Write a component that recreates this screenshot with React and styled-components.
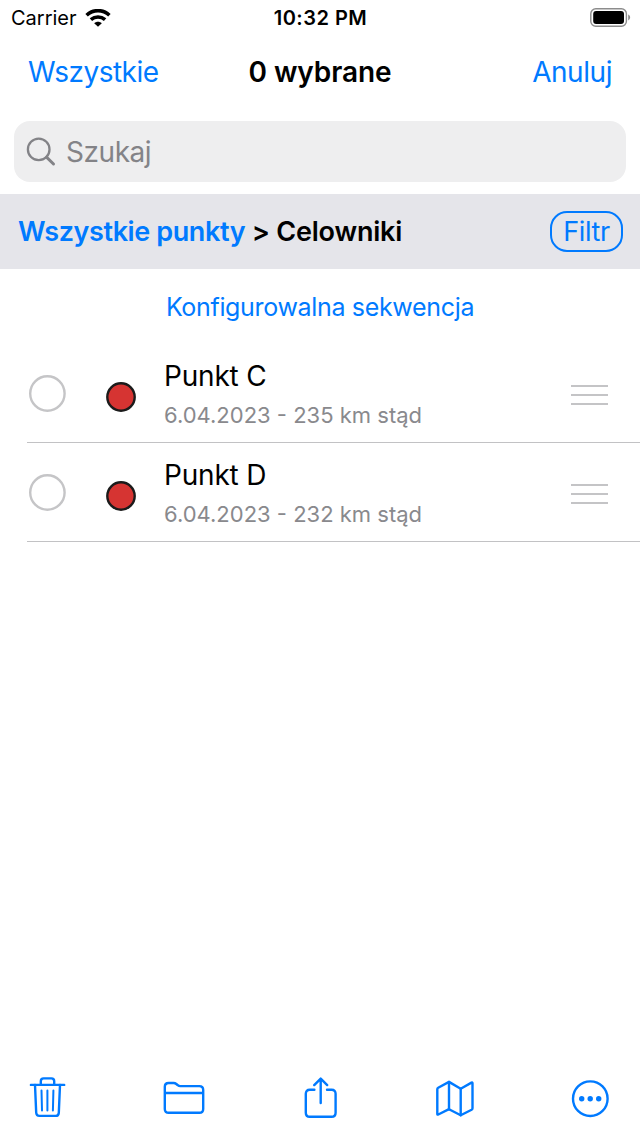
import React from "react";
import styled, { createGlobalStyle } from 'styled-components';

const GlobalStyle = createGlobalStyle`
    * {
        box-sizing: border-box;
    }
    body {
        margin: 0;
        background: #fff;
    }
`;

const Screen = styled.div`
    display: flex;
    flex-direction: column;
    width: 640px;
    height: 1136px;
    background: #fff;
    color: #000;
    font-family: Inter, "Liberation Sans", sans-serif;
    overflow: hidden;
`;

// size, weight and tracking differ for every label
const Text = styled.span`
    font-size: ${({ $size }) => $size}px;
    line-height: 36px;
    font-weight: ${({ $weight }) => $weight || 400};
    letter-spacing: ${({ $track }) => $track || 0}px;
    color: ${({ $color }) => $color || 'inherit'};
    white-space: pre;
`;

const StatusBar = styled.header`
    display: grid;
    grid-template-columns: 1fr auto 1fr;
    align-items: center;
    height: 35px;
    padding: 0 10px 0 11px;
`;

const Carrier = styled.div`
    display: flex;
    align-items: center;
    gap: 8px;
`;

const Battery = styled.svg`
    justify-self: end;
    margin-top: -2px;
    margin-right: -1px;
`;

const NavBar = styled.nav`
    display: grid;
    grid-template-columns: 1fr auto 1fr;
    align-items: center;
    height: 74px;
    padding: 0 28px;
`;

const NavButton = styled.button`
    justify-self: ${({ $end }) => ($end ? 'end' : 'start')};
    padding: 0;
    border: 0;
    background: none;
    color: #007aff;
    font-family: inherit;
`;

const SearchField = styled.div`
    display: flex;
    align-items: center;
    gap: 10px;
    height: 61px;
    margin: 12px 14px;
    padding-left: 12px;
    border-radius: 16px;
    background: #eeeeef;
    color: #838387;
`;

const PathBar = styled.div`
    display: flex;
    align-items: center;
    justify-content: space-between;
    height: 75px;
    padding: 0 17px 0 18px;
    background: #e5e5ea;
`;

const FilterButton = styled(NavButton)`
    width: 73px;
    height: 41px;
    border: 2px solid #007aff;
    border-radius: 17px;
`;

const Sequence = styled.div`
    display: flex;
    align-items: center;
    justify-content: center;
    height: 75px;
`;

const List = styled.ul`
    flex: 1;
    margin: 0;
    padding: 0 0 0 27px;
    list-style: none;
`;

const Row = styled.li`
    display: flex;
    align-items: center;
    height: 99px;
    padding-right: 32px;
    border-bottom: 1px solid #c2c2c4;
`;

const Check = styled.svg`
    width: 37px;
    height: 37px;
    margin-left: 2px;
    fill: none;
    stroke: #c5c5c7;
    stroke-width: 2.4;
`;

const Marker = styled.svg`
    width: 30px;
    height: 30px;
    margin: 7px 28px 0 40px;
    fill: #d63432;
    stroke: #1b1b1b;
    stroke-width: 2.4;
`;

const Details = styled.div`
    display: flex;
    flex: 1;
    flex-direction: column;
    gap: 3px;
    padding-top: 5px;
`;

const Handle = styled.span`
    width: 37px;
    height: 20px;
    margin-top: 3px;
    border: solid #c4c4c6;
    border-width: 2px 0;
    background: linear-gradient(#c4c4c6, #c4c4c6) 0 7px / 100% 2px no-repeat;
`;

const Toolbar = styled.footer`
    display: flex;
    justify-content: space-between;
    padding: 0 28px 16px 26px;
`;

const ToolIcon = styled.svg`
    width: 44px;
    height: 44px;
    fill: none;
    stroke: #007aff;
    stroke-width: 2.4;
    stroke-linecap: round;
    stroke-linejoin: round;
`;

const points = [
    { name: 'Punkt C', info: '6.04.2023 - 235 km stąd' },
    { name: 'Punkt D', info: '6.04.2023 - 232 km stąd' },
];

const WifiIcon = () => (
    <svg width="26" height="19" viewBox="0 0 26 19" fill="none" stroke="#000" strokeWidth="3.6">
        <path d="M1.6 6.2C8.2.1 17.8.1 24.4 6.2" />
        <path d="M5.9 10.7c4.2-3.7 10-3.7 14.2 0" />
        <path d="M13 17.8l-3.8-3.6c2.2-2 5.4-2 7.6 0z" fill="#000" stroke="none" />
    </svg>
);

const BatteryIcon = () => (
    <Battery width="41" height="19" viewBox="0 0 41 19">
        <rect x="0.8" y="0.8" width="35.6" height="17.4" rx="5" fill="none" stroke="#8c8c8c" strokeWidth="1.4" />
        <rect x="3.2" y="3.1" width="30.8" height="12.8" rx="3" fill="#000" />
        <path d="M38.2 6.6c2.6 1 2.6 4.8 0 5.8z" fill="#8c8c8c" />
    </Battery>
);

const SearchIcon = () => (
    <svg width="30" height="30" viewBox="0 0 30 30" fill="none" stroke="#838387" strokeLinecap="round">
        <circle cx="12.7" cy="12.4" r="10.8" strokeWidth="2.3" />
        <path d="M20.5 20.2l7 6.8" strokeWidth="3" />
    </svg>
);

const App = () => {
    return (
        <Screen>
            <GlobalStyle />
            <StatusBar>
                <Carrier>
                    <Text $size={20}>Carrier</Text>
                    <WifiIcon />
                </Carrier>
                <Text $size={20} $weight={600} $track={0.5}>10:32 PM</Text>
                <BatteryIcon />
            </StatusBar>
            <NavBar>
                <NavButton><Text $size={28} $track={-0.5}>Wszystkie</Text></NavButton>
                <Text $size={28} $weight={600} $track={-0.1}>0 wybrane</Text>
                <NavButton $end><Text $size={28} $track={-0.45}>Anuluj</Text></NavButton>
            </NavBar>
            <SearchField>
                <SearchIcon />
                <Text $size={28} $track={-0.45}>Szukaj</Text>
            </SearchField>
            <PathBar>
                <div>
                    <Text $size={27} $weight={600} $track={-0.4} $color="#007aff">Wszystkie punkty</Text>
                    <Text $size={27} $weight={600} $track={-0.2}> &gt; Celowniki</Text>
                </div>
                <FilterButton><Text $size={27} $track={-0.4}>Filtr</Text></FilterButton>
            </PathBar>
            <Sequence>
                <Text $size={25} $track={-0.33} $color="#007aff">Konfigurowalna sekwencja</Text>
            </Sequence>
            <List>
                {points.map(point => (
                    <Row key={point.name}>
                        <Check viewBox="0 0 37 37"><circle cx="18.4" cy="18.5" r="17.2" /></Check>
                        <Marker viewBox="0 0 30 30"><circle cx="15" cy="15" r="13.7" /></Marker>
                        <Details>
                            <Text $size={28} $track={-0.2}>{point.name}</Text>
                            <Text $size={22} $color="#89898d">{point.info}</Text>
                        </Details>
                        <Handle />
                    </Row>
                ))}
            </List>
            <Toolbar>
                <ToolIcon viewBox="0 0 44 44">
                    <path d="M4.9 8.9h33.3M14.8 8.5V5.2q0-2.8 2.8-2.8h7.8q2.8 0 2.8 2.8v3.3" />
                    <path d="M9 9l1.2 27.8q.2 3.1 3.2 3.1h16.2q3 0 3.2-3.1L34 9" />
                    <path d="M15.5 14.6l.5 20M21.4 14.6v20M27.4 14.6l-.5 20" strokeWidth="2" />
                </ToolIcon>
                <ToolIcon viewBox="0 0 44 44">
                    <path d="M2.8 17V10.8Q2.8 7 6.6 7h5q1.5 0 2.7 1l1.5 1.2q1 .9 2.5.9h19Q41.2 10.1 41.2 14v19q0 3.8-3.9 3.8H6.7q-3.9 0-3.9-3.8V17h38.4" />
                </ToolIcon>
                <ToolIcon viewBox="0 0 44 44">
                    <path d="M17.4 13.8h-4.6q-4 0-4 4v19q0 4 4 4h21.8q4 0 4-4v-19q0-4-4-4H30" />
                    <path d="M23.7 27V2.6M17.2 9.1l6.5-6.5 6.5 6.5" />
                </ToolIcon>
                <ToolIcon viewBox="0.5 0 44 44">
                    <path d="M4.8 13.2q0-1 .9-1.5L16.5 5.9l11.7 6.8L39 6.6q1-.5 1 .6v25q0 1-.9 1.5l-10.9 5.6-11.7-6.1-10.7 5.3q-1 .5-1-.6z" />
                    <path d="M16.5 5.9v27.3M28.2 12.7v26.6" />
                </ToolIcon>
                <ToolIcon viewBox="0 0 44 44">
                    <circle cx="22.3" cy="22.7" r="17.3" />
                    <g fill="#007aff" stroke="none">
                        <circle cx="13.7" cy="22.7" r="2.7" />
                        <circle cx="22.2" cy="22.7" r="2.7" />
                        <circle cx="30.7" cy="22.7" r="2.7" />
                    </g>
                </ToolIcon>
            </Toolbar>
        </Screen>
    );
};

export default App;
